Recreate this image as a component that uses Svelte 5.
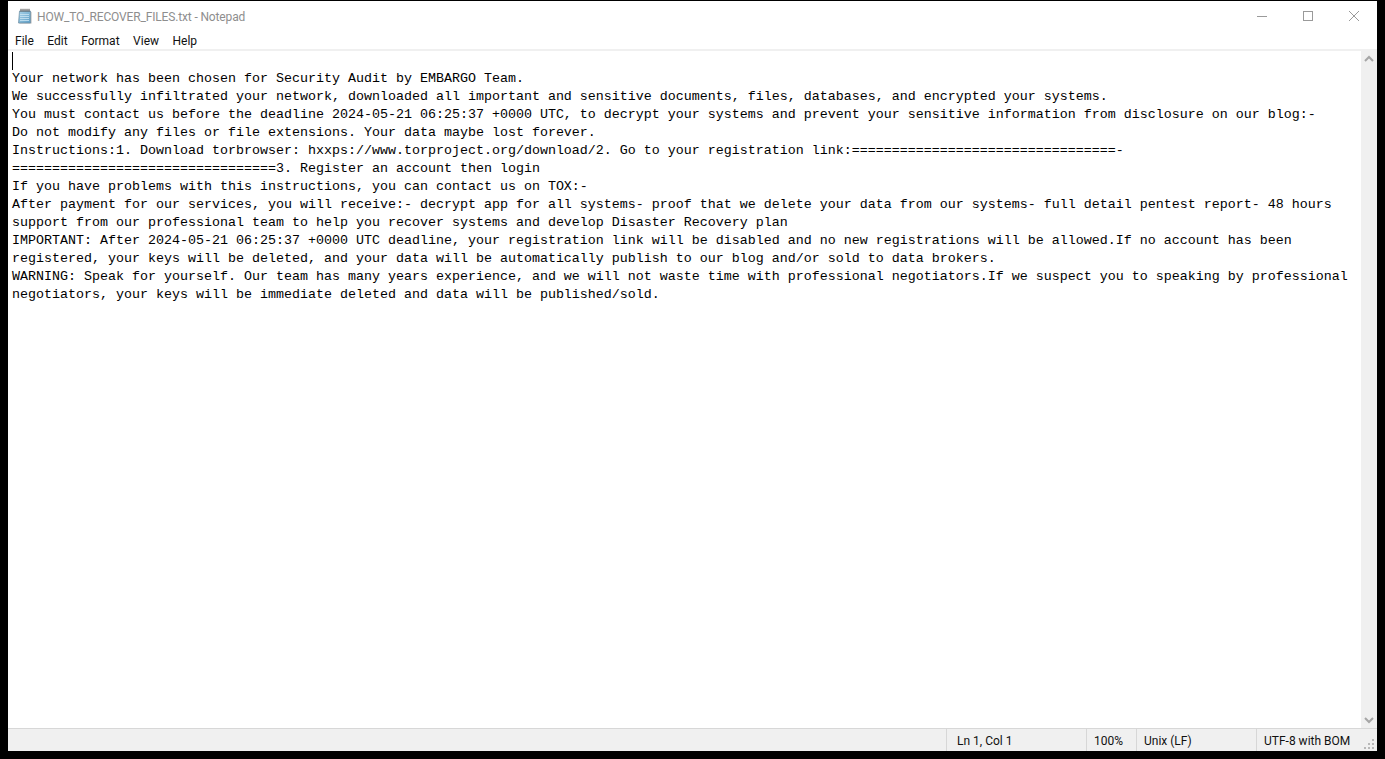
<script lang="ts">
  const menus = ['File', 'Edit', 'Format', 'View', 'Help'];
  const eq = '='.repeat(33);
  const lines = [
    '',
    'Your network has been chosen for Security Audit by EMBARGO Team.',
    'We successfully infiltrated your network, downloaded all important and sensitive documents, files, databases, and encrypted your systems.',
    'You must contact us before the deadline 2024-05-21 06:25:37 +0000 UTC, to decrypt your systems and prevent your sensitive information from disclosure on our blog:-',
    'Do not modify any files or file extensions. Your data maybe lost forever.',
    `Instructions:1. Download torbrowser: hxxps://www.torproject.org/download/2. Go to your registration link:${eq}-`,
    `${eq}3. Register an account then login`,
    'If you have problems with this instructions, you can contact us on TOX:-',
    'After payment for our services, you will receive:- decrypt app for all systems- proof that we delete your data from our systems- full detail pentest report- 48 hours',
    'support from our professional team to help you recover systems and develop Disaster Recovery plan',
    'IMPORTANT: After 2024-05-21 06:25:37 +0000 UTC deadline, your registration link will be disabled and no new registrations will be allowed.If no account has been',
    'registered, your keys will be deleted, and your data will be automatically publish to our blog and/or sold to data brokers.',
    'WARNING: Speak for yourself. Our team has many years experience, and we will not waste time with professional negotiators.If we suspect you to speaking by professional',
    'negotiators, your keys will be immediate deleted and data will be published/sold.'
  ];
</script>

<div class="window">
  <header class="titlebar">
    <svg class="app-icon" viewBox="0 0 16 16" width="16" height="16">
      <defs>
        <linearGradient id="pad" x1="0" y1="0" x2="1" y2="1">
          <stop offset="0%" stop-color="#a9d4ea" />
          <stop offset="100%" stop-color="#5c9cc4" />
        </linearGradient>
      </defs>
      <path d="M13.5 3.5l1 .5v11.5H3l-1.5-.5h12z" fill="#b4b4b4" />
      <path d="M2.5 3h11v12H1.5z" fill="url(#pad)" stroke="#6d8ca0" stroke-width="0.7" />
      <path d="M3 6.5h9M3 8.5h9M3 10.5h9M3 12.5h9" stroke="#cbe6f4" stroke-width="0.8" />
      <path d="M4 .8v3M6 .8v3M8 .8v3M10 .8v3M12 .8v3" stroke="#4a4a4a" stroke-width="1" />
    </svg>
    <span class="title">HOW_TO_RECOVER_FILES.txt - Notepad</span>
    <div class="controls">
      <div class="ctl">
        <svg viewBox="0 0 12 12" width="12" height="12"><path d="M1 6.5h10" stroke="#9a9a9a" fill="none" /></svg>
      </div>
      <div class="ctl">
        <svg viewBox="0 0 12 12" width="12" height="12"><rect x="1.5" y="1.5" width="9" height="9" stroke="#9a9a9a" fill="none" /></svg>
      </div>
      <div class="ctl">
        <svg viewBox="0 0 12 12" width="12" height="12"><path d="M1 1l10 10M11 1L1 11" stroke="#9a9a9a" fill="none" /></svg>
      </div>
    </div>
  </header>

  <nav class="menubar">
    {#each menus as m}
      <span class="menu-item">{m}</span>
    {/each}
  </nav>

  <main class="editor">
    <div class="text">
      <span class="caret"></span>
      {#each lines as line}
        <div class="line">{line}</div>
      {/each}
    </div>
    <aside class="scrollbar">
      <svg viewBox="0 0 16 16" width="16" height="16"><path d="M4 10l4-4 4 4" stroke="#a6a6a6" stroke-width="2" fill="none" /></svg>
      <svg viewBox="0 0 16 16" width="16" height="16"><path d="M4 6l4 4 4-4" stroke="#a6a6a6" stroke-width="2" fill="none" /></svg>
    </aside>
  </main>

  <footer class="statusbar">
    <div class="cell spacer"></div>
    <div class="cell pos">Ln 1, Col 1</div>
    <div class="cell zoom">100%</div>
    <div class="cell eol">Unix (LF)</div>
    <div class="cell enc">UTF-8 with BOM</div>
    <svg class="grip" viewBox="0 0 12 12" width="12" height="12">
      <path d="M9 1h2v2H9zM5 5h2v2H5zM9 5h2v2H9zM1 9h2v2H1zM5 9h2v2H5zM9 9h2v2H9z" fill="#b8b8b8" />
    </svg>
  </footer>
</div>

<style>
  :global(body) {
    margin: 0;
    background: #000;
    overflow: hidden;
  }
  .window {
    box-sizing: border-box;
    width: 1369px;
    height: 750px;
    margin: 1px 8px 8px;
    background: #fff;
    display: flex;
    flex-direction: column;
    font-family: Roboto, "Open Sans", sans-serif;
    font-size: 12px;
    color: #000;
  }
  .titlebar {
    height: 30px;
    flex: none;
    display: flex;
    align-items: center;
    padding-left: 9px;
  }
  .app-icon { margin-right: 4px; }
  .title {
    color: #8e8e8e;
    font-size: 12px;
    letter-spacing: -0.15px;
    padding-top: 1px;
  }
  .controls {
    margin-left: auto;
    display: flex;
  }
  .ctl {
    width: 46px;
    height: 30px;
    display: flex;
    align-items: center;
    justify-content: center;
  }
  .menubar {
    box-sizing: border-box;
    height: 20px;
    flex: none;
    display: flex;
    align-items: center;
    gap: 13.5px;
    padding-left: 7px;
    padding-top: 2px;
    border-bottom: 2px solid #f0f0f0;
  }
  .menu-item { color: #111; }
  .editor {
    flex: 1;
    display: flex;
    min-height: 0;
  }
  .text {
    position: relative;
    flex: 1;
    padding: 1px 0 0 4px;
    font-family: "Liberation Mono", monospace;
    font-size: 13.33px;
    line-height: 18px;
    color: #000;
  }
  .line {
    height: 18px;
    white-space: pre;
  }
  .caret {
    position: absolute;
    left: 4px;
    top: 1px;
    width: 1px;
    height: 18px;
    background: #000;
  }
  .scrollbar {
    width: 16px;
    flex: none;
    background: #f0f0f0;
    display: flex;
    flex-direction: column;
    justify-content: space-between;
  }
  .statusbar {
    position: relative;
    box-sizing: border-box;
    height: 23px;
    flex: none;
    display: flex;
    background: #f0f0f0;
    border-top: 1px solid #d7d7d7;
  }
  .cell {
    box-sizing: border-box;
    padding-left: 10px;
    line-height: 24px;
    border-left: 1px solid #d7d7d7;
    color: #111;
  }
  .spacer { width: 938px; border-left: none; }
  .pos { width: 140px; }
  .zoom { width: 50px; padding-left: 7px; }
  .eol { width: 120px; padding-left: 7px; }
  .enc { flex: 1; padding-left: 7px; }
  .grip {
    position: absolute;
    right: 2px;
    bottom: 1px;
  }
</style>
